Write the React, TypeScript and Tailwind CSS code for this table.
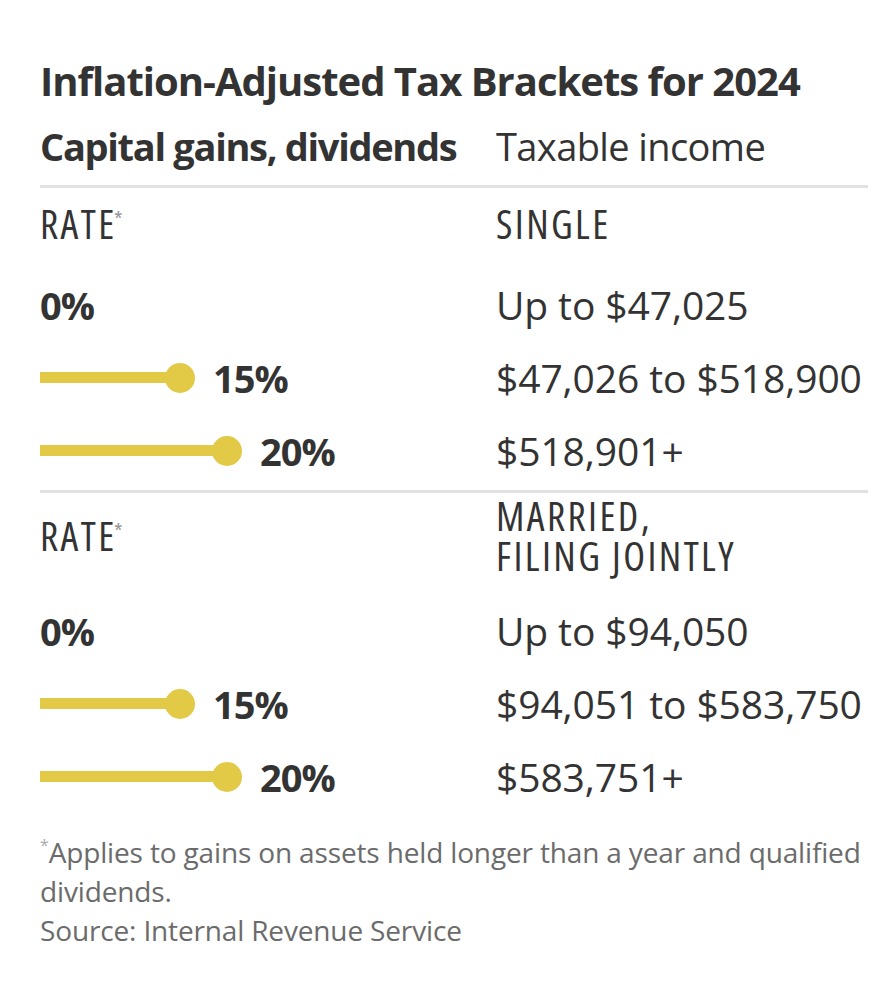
type Bracket = { rate: string; bar: number; range: string };

type Section = { status: string[]; wrap: string; head: string; rows: Bracket[] };

const sections: Section[] = [
  {
    status: ["SINGLE"],
    wrap: "mt-[5px]",
    head: "h-[72px] mb-[8px]",
    rows: [
      { rate: "0%", bar: 0, range: "Up to $47,025" },
      { rate: "15%", bar: 140, range: "$47,026 to $518,900" },
      { rate: "20%", bar: 187, range: "$518,901+" },
    ],
  },
  {
    status: ["MARRIED,", "FILING JOINTLY"],
    wrap: "mt-[3px]",
    head: "h-[86px] mb-[15px]",
    rows: [
      { rate: "0%", bar: 0, range: "Up to $94,050" },
      { rate: "15%", bar: 140, range: "$94,051 to $583,750" },
      { rate: "20%", bar: 187, range: "$583,751+" },
    ],
  },
];

function RateBar({ width }: { width: number }) {
  if (!width) return null;
  return (
    <div className="flex items-center mr-[18px]">
      <div className="h-[11px] bg-[#e2c946]" style={{ width }} />
      <div className="w-[30px] h-[30px] rounded-full bg-[#e2c946] ml-[-15px]" />
    </div>
  );
}

export default function App() {
  return (
    <div className="bg-white min-h-[1000px] pl-10 pr-4 pt-[50px] text-[#333] font-['Open_Sans',sans-serif]">
      <h1 className="h-[62px] flex items-center text-[40px] leading-none font-bold tracking-[-1px] whitespace-nowrap">
        Inflation-Adjusted Tax Brackets for 2024
      </h1>
      <div className="h-[68px] grid grid-cols-[456px_1fr] items-center">
        <div className="text-[38px] leading-none font-bold tracking-[-1.3px] whitespace-nowrap">Capital gains, dividends</div>
        <div className="text-[38px] leading-none tracking-[-0.6px] whitespace-nowrap">Taxable income</div>
      </div>

      {sections.map((s, i) => (
        <section key={i} className={`${s.wrap} border-t-[3px] border-[#e2e2e2]`}>
          <div className={`${s.head} grid grid-cols-[456px_1fr] items-center text-[40px] leading-[40px] font-stretch-[85%] tracking-[2.4px]`}>
            <div className="whitespace-nowrap">
              RAT<span className="tracking-normal">E</span>
              <span className="inline-block align-top relative top-[3px] text-[22px] leading-none text-[#999] tracking-normal">*</span>
            </div>
            <div>
              {s.status.map((l) => (
                <div key={l} className="whitespace-nowrap">{l}</div>
              ))}
            </div>
          </div>
          {s.rows.map((r) => (
            <div key={r.rate} className="h-[73px] grid grid-cols-[456px_1fr] items-center">
              <div className="flex items-center">
                <RateBar width={r.bar} />
                <span className="text-[38px] leading-none font-bold tracking-[-1px]">{r.rate}</span>
              </div>
              <div className="text-[39px] leading-none tracking-[-0.1px] whitespace-nowrap">{r.range}</div>
            </div>
          ))}
        </section>
      ))}

      <div className="mt-[20px] text-[28px] leading-[39px] text-[#6b6b6b] tracking-[-0.15px]">
        <div className="whitespace-nowrap">
          <span className="inline-block align-top relative top-[4px] text-[16px] leading-none text-[#aaa]">*</span>
          Applies to gains on assets held longer than a year and qualified
        </div>
        <div>dividends.</div>
        <div>Source: Internal Revenue Service</div>
      </div>
    </div>
  );
}
